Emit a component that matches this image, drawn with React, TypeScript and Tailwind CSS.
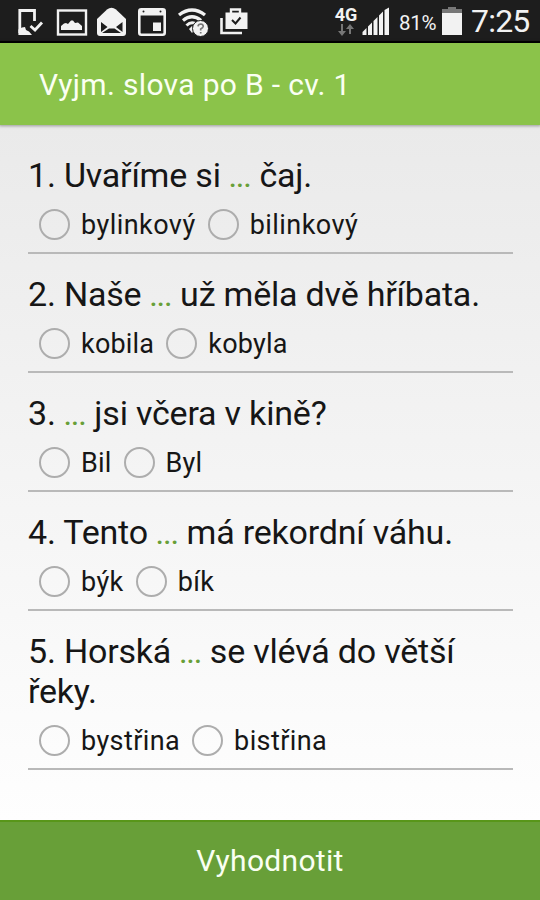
type Question = { before: string; after: string; options: string[]; tracking: string };

const questions: Question[] = [
  { before: "1. Uvaříme si ", after: " čaj.", options: ["bylinkový", "bilinkový"], tracking: "tracking-[0.45px]" },
  { before: "2. Naše ", after: " už měla dvě hříbata.", options: ["kobila", "kobyla"], tracking: "tracking-[0.2px]" },
  { before: "3. ", after: " jsi včera v kině?", options: ["Bil", "Byl"], tracking: "tracking-[0.2px]" },
  { before: "4. Tento ", after: " má rekordní váhu.", options: ["býk", "bík"], tracking: "tracking-[0.4px]" },
  { before: "5. Horská ", after: " se vlévá do větší řeky.", options: ["bystřina", "bistřina"], tracking: "tracking-[0.4px]" },
];

/* Notification icons on the left, all in one strip */
function NotificationIcons() {
  return (
    <svg className="h-[43px] w-[250px] shrink-0" viewBox="0 0 250 43" fill="none">
      {/* phone with check */}
      <path d="M34.5 21V10.5H19.8V33" stroke="#f2f2f2" strokeWidth="2.8" />
      <path d="M18.4 35V29.500L22 27.500L25 27L26 30L29 31.500L32 35Z" fill="#f2f2f2" />
      <path d="M30.500 26L35 30L42 22.500" stroke="#f2f2f2" strokeWidth="2.800" />
      {/* picture */}
      <rect x="58" y="10.5" width="28" height="24" stroke="#f2f2f2" strokeWidth="2.4" />
      <path d="M61 30V26L64 23.500L66 23L68 24L71 20.500L73 20.500L75 23L78 22.500L82 26V30Z" fill="#f2f2f2" />
      {/* open mail */}
      <path d="M97 19L107 9.500Q111.500 6 116 9.500L126 19V33Q126 36 123 36H100Q97 36 97 33Z" fill="#f2f2f2" />
      <path d="M101 22L107.500 27L101 32ZM122.500 22L116 27L122.500 32ZM102 33L109 28.500H114.500L121 33Z" fill="#1d1d1d" />
      {/* calendar */}
      <rect x="139.300" y="9.300" width="25.400" height="25.400" rx="2" stroke="#f2f2f2" strokeWidth="2.600" />
      <path d="M139 9H165V15.500H139Z" fill="#f2f2f2" />
      <rect x="153" y="22.500" width="8" height="8.500" fill="#f2f2f2" />
      <circle cx="143.500" cy="11.500" r="1" fill="#1d1d1d" />
      <circle cx="160.500" cy="11.500" r="1" fill="#1d1d1d" />
      {/* wifi with question badge */}
      <path d="M179 15Q192 5 205 15" stroke="#f2f2f2" strokeWidth="3.400" />
      <path d="M183 20.500Q192 13 201 20.500" stroke="#f2f2f2" strokeWidth="3.200" />
      <path d="M186.500 25.500Q191.500 20.500 197 24.500" stroke="#f2f2f2" strokeWidth="3" />
      <path d="M189 29L192 26L195 29L192 33Z" fill="#f2f2f2" />
      <circle cx="200.500" cy="28.500" r="8" fill="#f2f2f2" stroke="#1d1d1d" strokeWidth="1" />
      <path d="M198 26.300Q198.300 24 200.800 24Q203.300 24.200 203.200 26.400Q203 27.700 200.700 29V30.500M200.700 32V33.500" stroke="#777" strokeWidth="1.700" />
      {/* bag with check */}
      <path d="M221.500 18V33H242" stroke="#f2f2f2" strokeWidth="2.600" />
      <path d="M225.500 12.500H247.500V29H225.500Z" fill="#f2f2f2" />
      <path d="M231 13V9.500H240V13" stroke="#f2f2f2" strokeWidth="2.400" />
      <path d="M232 20L235.500 23.500L240.500 17.500" stroke="#1d1d1d" strokeWidth="2" />
    </svg>
  );
}

function StatusBar() {
  return (
    <div className="flex h-[43px] shrink-0 items-start border-b-2 border-black bg-[#1d1d1d] text-[#f2f2f2]">
      <NotificationIcons />
      <div className="ml-[84px] flex w-6 shrink-0 flex-col items-center">
        <span className="mt-[5px] text-[18px] leading-[19px] font-bold">4G</span>
        <svg className="h-[13px] w-4" viewBox="0 0 16 13" fill="#777">
          <path d="M3 0H5V7H8L4 12L0 7H3ZM11 10H13V5H16L12 0L8 5H11Z" />
        </svg>
      </div>
      <svg className="ml-1 h-[43px] w-7 shrink-0" viewBox="0 0 28 43" fill="#f2f2f2">
        <path d="M0.500 35V32L4.500 28V35ZM6 35V26.500L10 22.500V35ZM11.500 35V21L15.500 17V35ZM17 35V15.500L21 11.500V35ZM22.500 35V10L27 7.500V35Z" />
      </svg>
      <span className="ml-[9px] w-10 shrink-0 text-[20.500px] leading-[47px] tracking-[-0.300px] whitespace-nowrap">81%</span>
      <svg className="ml-[3px] h-[43px] w-5 shrink-0" viewBox="0 0 20 43">
        <path d="M6 7H14V9H20V14H0V9H6Z" fill="#777" />
        <path d="M0 13H20V35H0Z" fill="#f2f2f2" />
      </svg>
      <span className="ml-[9px] text-[32px] leading-[43px] tracking-[-0.800px] whitespace-nowrap">7:25</span>
    </div>
  );
}

function QuestionItem({ q }: { q: Question }) {
  return (
    <section className="mb-[20.1px] border-b-2 border-[#b9b9b9]">
      <p className="text-[34px] leading-[40px] tracking-[-0.2px]">
        {q.before}
        <span className="text-[27px] leading-none font-medium tracking-[-0.1px] text-[#689f38]">...</span>
        {q.after}
      </p>
      <div className="flex h-[57px] items-center gap-3 pt-px pl-[11px]">
        {q.options.map((o) => (
          <div key={o} className="flex items-center gap-[11px]">
            <span className="h-[31px] w-[31px] rounded-full border-2 border-[#adadad]" />
            <span className={`pt-0.5 text-[27px] leading-8 ${q.tracking}`}>{o}</span>
          </div>
        ))}
      </div>
    </section>
  );
}

export default function App() {
  return (
    <div className="flex h-[900px] w-[540px] flex-col overflow-hidden font-[Roboto,sans-serif] text-[#161616]">
      <StatusBar />
      <header className="z-10 flex h-[82px] shrink-0 items-center bg-[#8bc34a] pl-[39px] text-[30px] tracking-[0.33px] text-[#fafff2] shadow-[0_0_3px_1px_rgba(0,0,0,0.35)]">
        Vyjm. slova po B - cv. 1
      </header>
      <main className="min-h-0 flex-1 bg-linear-to-b from-[#eaeaea] to-[#fefefe] pt-[30px] pr-[27px] pl-7">
        {questions.map((q) => (
          <QuestionItem key={q.before} q={q} />
        ))}
      </main>
      <button className="h-[80px] shrink-0 border-t-2 border-[#589619] bg-[#689f38] pb-[2px] text-[30px] tracking-[0.3px] text-[#fafff2]">
        Vyhodnotit
      </button>
    </div>
  );
}
